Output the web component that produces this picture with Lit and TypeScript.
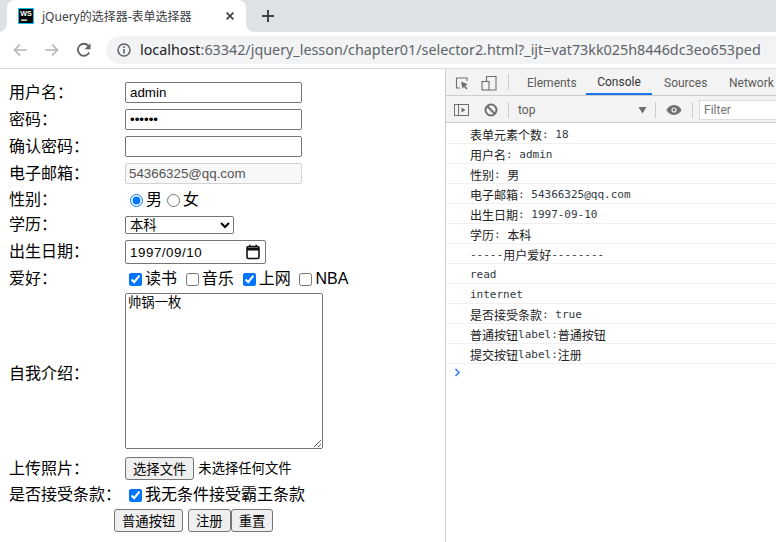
import { LitElement, html, css, svg } from "lit";
import { customElement } from "lit/decorators.js";

@customElement("app-root")
export class AppRoot extends LitElement {
  static styles = css`
    :host { display: block; width: 776px; height: 542px; overflow: hidden; background: #fff; font-family: "Liberation Sans", "Noto Sans CJK SC", sans-serif; color: #000; }
    svg { display: block; flex: none; }
    .tabstrip { height: 32px; background: #dee1e6; display: flex; align-items: stretch; }
    .tab { position: relative; margin-left: 7px; width: 239px; background: #fff; border-radius: 8px 8px 0 0; display: flex; align-items: center; padding: 0 0 1px 11px; box-sizing: border-box; }
    .tab::before, .tab::after { content: ""; position: absolute; bottom: 0; width: 8px; height: 8px; }
    .tab::before { left: -8px; background: radial-gradient(circle at 0 0, transparent 7.5px, #fff 8px); }
    .tab::after { right: -8px; background: radial-gradient(circle at 100% 0, transparent 7.5px, #fff 8px); }
    .tab-title { margin-left: 8px; font: 12px "Noto Sans", "Noto Sans CJK SC", sans-serif; color: #3c4043; white-space: nowrap; width: 182px; }
    .fav-text { font: 700 7px "Liberation Sans", sans-serif; fill: #fff; }
    .plus { margin: 0 0 1px 15px; align-self: center; }
    .toolbar { box-sizing: border-box; border-bottom: 1px solid #dadce0; display: flex; align-items: center; padding-left: 12px; gap: 16px; height: 37px; }
    .omni { margin-left: -2px; flex: none; width: 690px; height: 28px; border-radius: 14px; background: #f1f3f4; display: flex; align-items: center; padding-left: 10px; box-sizing: border-box; }
    .url { margin-left: 8px; font: 14.33px/28px "Noto Sans", sans-serif; color: #5f6368; white-space: nowrap; }
    .url b { font-weight: 400; color: #202124; }
    .main { display: flex; height: 473px; }
    .page { width: 445px; flex: none; box-sizing: border-box; padding: 10px 0 0 9px; }
    .form { display: grid; grid-template-columns: 116px 1fr; grid-template-rows: 27px 27px 27px 27px 26px 24px 30px 24px 165px 25px 28px 23px; align-items: center; font-size: 16px; line-height: 20px; }
    .form input[type="text"], .form input[type="password"], .form input[type="email"] { box-sizing: border-box; width: 177px; height: 21px; font: 13.33px "Liberation Sans", "Noto Sans CJK SC", sans-serif; padding: 1px 3px; margin: 0; display: block; }
    .form input[type="email"] { padding-left: 2px; }
    .choices { display: flex; align-items: center; padding-left: 4px; }
    .choices input { flex: none; }
    .choices input[type="radio"] { margin: 0 3px 0 1px; width: 13px; height: 13px; }
    .choices input[type="radio"].second { margin-left: 5px; }
    .choices input[type="checkbox"] { margin: 0 3px 0 0; }
    .gap { margin-right: 8.8px; }
    select { width: 109px; height: 18px; box-sizing: border-box; font: 13.33px "Liberation Sans", "Noto Sans CJK SC", sans-serif; padding: 0; margin: 0; display: block; }
    .date { box-sizing: border-box; width: 141px; height: 24px; border: 1px solid #767676; border-radius: 2px; display: flex; align-items: center; justify-content: space-between; padding: 0 5px 0 4px; font: 13.33px "Liberation Sans", sans-serif; letter-spacing: .55px; }
    textarea { box-sizing: border-box; display: block; align-self: start; width: 198px; height: 156px; margin: 2px 0 0; padding: 2px; font: 13.33px/15px "Liberation Mono", "Noto Sans CJK SC", monospace; }
    .file { display: flex; align-items: center; font-size: 13.33px; }
    .btn { box-sizing: border-box; height: 23px; padding: 1px 7px; margin: 0; font: 13.33px "Liberation Sans", "Noto Sans CJK SC", sans-serif; background: #efefef; border: 1px solid #767676; border-radius: 3px; color: #000; white-space: nowrap; }
    .file .btn { margin-right: 4px; }
    .actions { grid-column: 1 / 3; display: flex; padding-left: 105px; }
    .actions .first { margin-right: 4.7px; }
    .devtools { flex: 1; min-width: 0; border-left: 1px solid #cbcdd1; display: flex; flex-direction: column; overflow: hidden; }
    .dt-bar { height: 27px; background: #f3f3f3; border-bottom: 1px solid #ccc; box-sizing: border-box; display: flex; align-items: center; flex: none; font: 12px Roboto, sans-serif; color: #5a5a5a; white-space: nowrap; }
    .dt-bar.second { padding-top: 1px; }
    .dt-bar > * { flex: none; }
    .sep { width: 1px; height: 16px; background: #ccc; }
    .ico-inspect { margin: 1px 0 0 8px; }
    .ico-device { margin: 1px 0 0 11px; }
    .sep-a { margin-left: 11px; }
    .tab-elements { margin-left: 18px; width: 59px; }
    .tab-console { width: 66px; }
    .tab-sources { margin-left: 12px; width: 65px; }
    .dt-tab { height: 26px; box-sizing: border-box; padding-top: 2px; display: flex; align-items: center; }
    .dt-tab.active { color: #333; border-bottom: 2px solid #1a73e8; justify-content: center; }
    .ico-side { margin-left: 8px; }
    .ico-block { margin-left: 14px; }
    .sep-b { margin-left: 10px; }
    .ctx { margin-left: 9px; width: 120px; }
    .sep-c { margin-left: 8px; }
    .ico-eye { margin-left: 10px; }
    .sep-d { margin-left: 10px; }
    .filter { margin-left: 6px; width: 90px; height: 20px; background: #fff; border: 1px solid #ddd; box-sizing: border-box; padding-left: 4px; line-height: 18px; color: #757575; }
    .logs { flex: 1; padding-top: 1px; }
    .log { height: 20px; box-sizing: border-box; border-bottom: 1px solid #f0f0f0; padding: 1px 0 0 24px; display: flex; align-items: center; white-space: pre; font: 11px "DejaVu Sans Mono", monospace; color: #303942; }
    .log span { font: 12px "Noto Sans CJK SC", sans-serif; color: #222; }
    .prompt { padding: 4px 0 0 8px; }
  `;

  private icon(d: string, w = 16, h = 16, color = "#5f6368", sw = 2) {
    return html`<svg width=${w} height=${h} viewBox="0 0 16 16" fill="none" stroke=${color} stroke-width=${sw}>${svg`<path d=${d}/>`}</svg>`;
  }

  private zh(cn: string, rest: string) {
    return html`<div class="log"><span>${cn}</span>${rest}</div>`;
  }

  render() {
    return html`
      <div class="tabstrip">
        <div class="tab">
          <svg width="16" height="16" viewBox="0 0 16 16">
            <rect width="16" height="16" fill="#07c3f2"/><rect x="1" y="1" width="14" height="14" fill="#000"/>
            <text class="fav-text" x="2.2" y="8.2" textLength="11.600" lengthAdjust="spacingAndGlyphs">WS</text>
            <rect x="3" y="11.500" width="6" height="1.300" fill="#fff"/>
          </svg>
          <div class="tab-title">jQuery的选择器-表单选择器</div>
          ${this.icon("M3.5 3.5l9 9M12.5 3.5l-9 9", 12, 12, "#3c4043", 2.2)}
        </div>
        <svg class="plus" width="14" height="14" viewBox="0 0 14 14" stroke="#3c4043" stroke-width="2"><path d="M7 1v12M1 7h12"/></svg>
      </div>
      <div class="toolbar">
        <svg width="16" height="16" viewBox="0 0 16 16" fill="none" stroke="#b4b6b9" stroke-width="1.7"><path d="M15 8H2.500M8 2.500L2.500 8 8 13.500"/></svg>
        <svg width="16" height="16" viewBox="0 0 16 16" fill="none" stroke="#b4b6b9" stroke-width="1.7"><path d="M1 8h12.500M8 2.500L13.500 8 8 13.500"/></svg>
        <svg width="16" height="16" viewBox="0 0 16 16" fill="none"><path d="M13.200 10.500A6 6 0 1 1 12.400 3.800" stroke="#5f6368" stroke-width="1.800"/><path d="M14.500 1.200v6h-6z" fill="#5f6368"/></svg>
        <div class="omni">
          <svg width="16" height="16" viewBox="0 0 16 16" fill="none"><circle cx="8" cy="8" r="6" stroke="#5f6368" stroke-width="1.500"/><path d="M8 7v4.500M8 4.300v1.600" stroke="#5f6368" stroke-width="1.600"/></svg>
          <div class="url"><b>localhost</b>:63342/jquery_lesson/chapter01/selector2.html?_ijt=vat73kk025h8446dc3eo653ped</div>
        </div>
      </div>
      <div class="main">
        <div class="page">
          <div class="form">
            <div>用户名：</div><input type="text" value="admin" />
            <div>密码：</div><input type="password" value="123456" />
            <div>确认密码：</div><input type="password" />
            <div>电子邮箱：</div><input type="email" value="54366325@qq.com" disabled />
            <div>性别：</div>
            <div class="choices"><input type="radio" name="g" checked /><span>男</span><input class="second" type="radio" name="g" /><span>女</span></div>
            <div>学历：</div><select><option>本科</option></select>
            <div>出生日期：</div>
            <div class="date"><span>1997/09/10</span>
              <svg width="14" height="16" viewBox="0 0 14 16" fill="none"><rect x="1" y="2.500" width="12" height="12" rx="1.500" stroke="#111" stroke-width="1.600"/><path d="M1 5h12" stroke="#111" stroke-width="3"/><path d="M3.800 .8v2M10.200 .8v2" stroke="#111" stroke-width="1.500"/></svg>
            </div>
            <div>爱好：</div>
            <div class="choices">
              <input type="checkbox" checked /><span class="gap">读书</span>
              <input type="checkbox" /><span class="gap">音乐</span>
              <input type="checkbox" checked /><span class="gap">上网</span>
              <input type="checkbox" /><span>NBA</span>
            </div>
            <div>自我介绍：</div><textarea .value=${"帅锅一枚"}></textarea>
            <div>上传照片：</div>
            <div class="file"><button class="btn">选择文件</button><span>未选择任何文件</span></div>
            <div>是否接受条款：</div>
            <div class="choices"><input type="checkbox" checked /><span>我无条件接受霸王条款</span></div>
            <div class="actions"><button class="btn first">普通按钮</button><button class="btn">注册</button><button class="btn">重置</button></div>
          </div>
        </div>
        <div class="devtools">
          <div class="dt-bar">
            <svg class="ico-inspect" width="16" height="16" viewBox="0 0 16 16" fill="none"><path d="M6 13H2.500V3H13v3" stroke="#6e6e6e" stroke-width="1.100"/><path d="M7 6.500l7 3-3 1.200 2.600 2.800-1.200 1.100-2.500-2.800L8.500 14z" fill="#6e6e6e"/></svg>
            <svg class="ico-device" width="16" height="16" viewBox="0 0 16 16" fill="none" stroke="#6e6e6e" stroke-width="1.100"><path d="M5.500 6V1.500H15V15H8"/><rect x="1" y="6.500" width="7" height="8.500"/></svg>
            <div class="sep sep-a"></div>
            <div class="dt-tab tab-elements">Elements</div>
            <div class="dt-tab active tab-console">Console</div>
            <div class="dt-tab tab-sources">Sources</div>
            <div class="dt-tab">Network</div>
          </div>
          <div class="dt-bar second">
            <svg class="ico-side" width="16" height="14" viewBox="0 0 16 14" fill="none"><rect x=".5" y="1.500" width="14" height="11" stroke="#6e6e6e"/><path d="M4.500 1.500v11" stroke="#6e6e6e"/><path d="M7.500 4.500l4 2.500-4 2.500z" fill="#6e6e6e"/></svg>
            <svg class="ico-block" width="14" height="14" viewBox="0 0 14 14" fill="none" stroke="#6e6e6e" stroke-width="2"><circle cx="7" cy="7" r="5.500"/><path d="M3 3l8 8"/></svg>
            <div class="sep sep-b"></div>
            <div class="ctx">top</div>
            <svg width="9" height="8" viewBox="0 0 9 8"><path d="M.5 1h8L4.500 7.500z" fill="#6e6e6e"/></svg>
            <div class="sep sep-c"></div>
            <svg class="ico-eye" width="16" height="12" viewBox="0 0 16 12"><path d="M8 1C4.500 1 1.800 3.200.500 6c1.300 2.800 4 5 7.500 5s6.200-2.200 7.500-5C14.200 3.200 11.500 1 8 1z" fill="#6e6e6e"/><circle cx="8" cy="6" r="2.600" fill="#f3f3f3"/><circle cx="8" cy="6" r="1.400" fill="#6e6e6e"/></svg>
            <div class="sep sep-d"></div>
            <div class="filter">Filter</div>
          </div>
          <div class="logs">
            ${this.zh("表单元素个数", ": 18")}
            ${this.zh("用户名", ": admin")}
            <div class="log"><span>性别</span>: <span>男</span></div>
            ${this.zh("电子邮箱", ": 54366325@qq.com")}
            ${this.zh("出生日期", ": 1997-09-10")}
            <div class="log"><span>学历</span>: <span>本科</span></div>
            <div class="log">-----<span>用户爱好</span>--------</div>
            <div class="log">read</div>
            <div class="log">internet</div>
            ${this.zh("是否接受条款", ": true")}
            <div class="log"><span>普通按钮</span>label:<span>普通按钮</span></div>
            <div class="log"><span>提交按钮</span>label:<span>注册</span></div>
            <div class="prompt"><svg width="7" height="9" viewBox="0 0 7 9" fill="none" stroke="#367cf1" stroke-width="1.600"><path d="M1.500 1l3.500 3.500L1.500 8"/></svg></div>
          </div>
        </div>
      </div>
    `;
  }
}
